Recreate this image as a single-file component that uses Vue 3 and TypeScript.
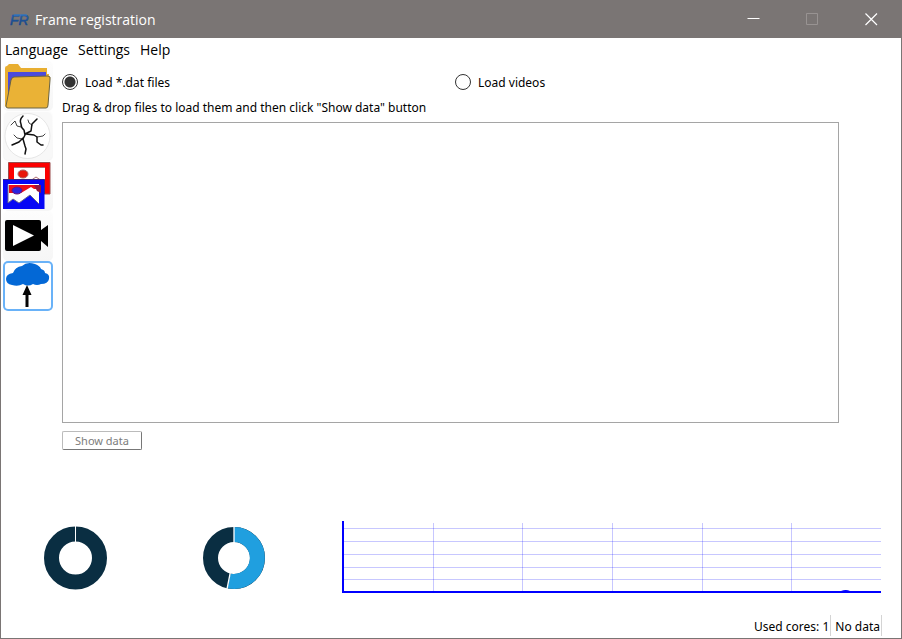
<script setup lang="ts">
import { computed, ref } from 'vue'

type Mode = 'dat' | 'video'
type Tool = 'open' | 'vessels' | 'images' | 'video' | 'load'

const mode = ref<Mode>('dat')
const activeTool = ref<Tool>('load')
const files = ref<string[]>([])

const menus = ['Language', 'Settings', 'Help']
const tools: { id: Tool; label: string }[] = [
  { id: 'open', label: 'Open folder' },
  { id: 'vessels', label: 'Vessels' },
  { id: 'images', label: 'Register images' },
  { id: 'video', label: 'Video' },
  { id: 'load', label: 'Load data' },
]

const status = computed(() => (files.value.length ? `${files.value.length} files` : 'No data'))

const gridRows = [7, 20, 33, 46, 58]
const gridColumns = [91, 180, 270, 360, 449]

function onDrop(event: DragEvent) {
  const dropped = Array.from(event.dataTransfer?.files ?? [])
  files.value.push(...dropped.map((f) => f.name))
}
</script>

<template>
  <div class="window">
    <header class="titlebar">
      <svg class="logo" viewBox="0 0 22 18" aria-hidden="true">
        <defs>
          <linearGradient id="logo-fill" x1="0" y1="0" x2="0" y2="1">
            <stop offset="0" stop-color="#2f78c8" />
            <stop offset="1" stop-color="#0b2f66" />
          </linearGradient>
        </defs>
        <text x="1" y="14" fill="url(#logo-fill)" stroke="#1d4f94" stroke-width=".5">FR</text>
        <path d="M5 4H18" stroke="#2f78c8" stroke-width="1.200" />
      </svg>
      <h1>Frame registration</h1>
      <div class="controls">
        <button type="button" aria-label="Minimize">
          <svg viewBox="0 0 13 13"><path d="M.5 5.500H12.500" stroke="#fff" /></svg>
        </button>
        <button type="button" aria-label="Maximize" disabled>
          <svg viewBox="0 0 13 13"><path d="M.5 .5H11.500V11.500H.5Z" stroke="#989392" /></svg>
        </button>
        <button type="button" aria-label="Close">
          <svg viewBox="0 0 13 13"><path d="M.5 .5L12 12M12 .5L.5 12" stroke="#fff" stroke-width="1.200" /></svg>
        </button>
      </div>
    </header>

    <nav class="menubar">
      <button v-for="menu in menus" :key="menu" type="button">{{ menu }}</button>
    </nav>

    <div class="body">
      <aside class="toolbar">
        <button
          v-for="tool in tools"
          :key="tool.id"
          type="button"
          :aria-label="tool.label"
          :class="{ active: tool.id === activeTool }"
          @click="activeTool = tool.id"
        >
          <svg v-if="tool.id === 'open'" viewBox="0 0 50 50">
            <path d="M2 45V7Q2 5 4 5L6 3H15L18 7H44V13H46L42 46H3Z" fill="#e8ae30" />
            <path d="M5 11H43V18H12L6 42H5Z" fill="#4c4bdc" />
            <path d="M11 16Q9 16 8 19L3 45Q3 47 5 47H43Q45 47 45 44L47 19Q48 15 45 15Z" fill="#eab236" stroke="#6b6340" />
          </svg>
          <svg v-else-if="tool.id === 'vessels'" viewBox="0 0 50 50">
            <rect x="1" y="1" width="48" height="48" rx="5" fill="#f8f8f8" />
            <circle cx="24.500" cy="25" r="22.500" fill="#fff" stroke="#ddd" stroke-width=".7" />
            <g fill="none" stroke="#111" stroke-linecap="round" stroke-linejoin="round">
              <path stroke-width="1.500" d="M20 5Q16 9 18 13Q18 17 21 19L22 24L20 28L22 35L23 38L22 43M22 23L28 20L29 13L34 8M23 23L31 24L34 26L34 31L38 34L40 34M20 27L16 31L9 34" />
              <path stroke-width=".8" d="M18 16L14 15L12 10L8 14M29 14L26 12L25 9M34 26L40 25L42 23M19 28L14 27L11 24" />
            </g>
          </svg>
          <svg v-else-if="tool.id === 'images'" viewBox="0 0 50 50">
            <path d="M5.500 1.500H47V33H5.500Z" fill="#fb0000" stroke="#9a4b4b" />
            <path d="M11 6H42V23L38 20L32 26L24 22L18 27L11 24Z" fill="#fff" />
            <path d="M11 6.500H42M24 22L33 16L42 22" fill="none" stroke="#b07070" />
            <ellipse cx="20" cy="13" rx="5" ry="4" fill="#e8180c" stroke="#a66" />
            <path d="M0 18H41.500V48H0Z" fill="#0707f5" />
            <path d="M5 23H36V43L27 34L16 42L10 38L5 42Z" fill="#fff" />
            <path d="M6 24H36V28H31L28 26L18 32H6Z" fill="#ef0c18" />
            <path d="M31 24H38V32L34 30Z" fill="#901640" />
            <ellipse cx="14" cy="29.500" rx="5" ry="3.500" fill="#2b22df" stroke="#6b1478" />
            <path d="M5 23.500V42L10 38L16 42L27 34L36 43" fill="none" stroke="#66668c" />
            <path d="M0 18.500H41.500V33" fill="none" stroke="#352780" />
          </svg>
          <svg v-else-if="tool.id === 'video'" viewBox="0 0 50 50">
            <path d="M4 9H36Q38 9 38 11V19L45 14V36L38 30V38Q38 40 36 40H4Q2 40 2 38V11Q2 9 4 9Z" fill="#000" />
            <path d="M10 14L31 24.500L10 35Z" fill="#fff" />
          </svg>
          <svg v-else viewBox="0 0 50 50">
            <path d="M9 24Q3 23 3 18Q3 13 10 12Q12 6 19 5Q24 0 32 3Q37 5 38 8Q42 9 42 12Q47 13 46 18Q45 23 38 23Q34 25 30 23Q25 26 20 23Q15 26 9 24Z" fill="#0368d6" />
            <path d="M24 24L28.500 34H25.500V46H22.500V34H19.500Z" fill="#050505" />
          </svg>
        </button>
      </aside>

      <main class="content">
        <div class="modes" role="radiogroup" aria-label="Source">
          <label><input v-model="mode" type="radio" name="mode" value="dat" /><span>Load *.dat files</span></label>
          <label><input v-model="mode" type="radio" name="mode" value="video" /><span>Load videos</span></label>
        </div>
        <p id="drop-hint" class="hint">Drag &amp; drop files to load them and then click "Show data" button</p>
        <ul class="dropzone" aria-labelledby="drop-hint" tabindex="0" @dragover.prevent @drop.prevent="onDrop">
          <li v-for="file in files" :key="file">{{ file }}</li>
        </ul>
        <button class="show" type="button" :disabled="files.length === 0">Show data</button>
      </main>
    </div>

    <section class="monitors">
      <svg class="donut" viewBox="0 0 64 64" aria-hidden="true">
        <circle cx="31.500" cy="32" r="24" fill="none" stroke="#0a2e42" stroke-width="15" />
        <path d="M31.500 0V17" stroke="#fff" />
      </svg>
      <svg class="donut" viewBox="0 0 64 64" aria-hidden="true">
        <circle cx="32" cy="32" r="23.500" fill="none" stroke="#0a2e42" stroke-width="15" />
        <path d="M32 8.500A23.500 23.500 0 1 1 27 55" fill="none" stroke="#209fdf" stroke-width="15" />
        <path d="M32 0V17M28.200 47L25 63" stroke="#fff" stroke-width="1.300" />
      </svg>
      <svg class="chart" viewBox="0 0 539 72" preserveAspectRatio="none" shape-rendering="crispEdges" aria-hidden="true">
        <g stroke="#00f" stroke-opacity=".22">
          <path v-for="y in gridRows" :key="`r${y}`" :d="`M2 ${y + 0.5}H539`" />
          <path v-for="x in gridColumns" :key="`c${x}`" :d="`M${x + 0.5} 2V70`" />
        </g>
        <path d="M499 70Q504 68 508 70Z" fill="#00f" shape-rendering="auto" />
        <path d="M1 0V71H539" fill="none" stroke="#00f" stroke-width="2" />
      </svg>
    </section>

    <footer class="statusbar">
      <span>Used cores: 1</span>
      <span>{{ status }}</span>
    </footer>
  </div>
</template>

<style>
body {
  margin: 0;
}
</style>

<style scoped>
* {
  box-sizing: border-box;
}
.window {
  display: flex;
  flex-direction: column;
  min-height: 100vh;
  border: 1px solid #7a7574;
  background: #fff;
  color: #000;
  font-family: "Noto Sans", "DejaVu Sans Condensed", sans-serif;
  font-size: 12px;
  line-height: 16px;
}
button {
  padding: 0;
  border: 0;
  background: none;
  color: inherit;
  font: inherit;
}
svg {
  display: block;
}
.titlebar {
  display: flex;
  align-items: center;
  height: 37px;
  padding-left: 8px;
  background: #7a7574;
  color: #fff;
}
.logo {
  width: 22px;
  height: 18px;
  margin-right: 4px;
  font: italic 14px "Liberation Sans", sans-serif;
}
h1 {
  flex: 1;
  margin: 0;
  font: 14px/20px "Open Sans", sans-serif;
}
.controls {
  display: flex;
  align-self: stretch;
}
.controls button {
  display: grid;
  place-items: center;
  width: 59px;
}
.controls svg {
  width: 13px;
  height: 13px;
  fill: none;
}
.menubar {
  display: flex;
  gap: 10px;
  padding: 2px 4px 1px;
  font: 14px/20px "Open Sans", sans-serif;
}
.body {
  display: flex;
  flex: 1;
  gap: 9px;
  padding: 0 62px 0 2px;
}
.toolbar {
  display: flex;
  flex-direction: column;
  width: 50px;
}
.toolbar button {
  width: 50px;
  height: 50px;
  border-radius: 5px;
  background: linear-gradient(#fdfdfd, #f6f6f6);
}
.toolbar button.active {
  background: #fff;
  box-shadow: inset 0 0 0 2px #69b2f8;
}
.toolbar svg {
  width: 100%;
  height: 100%;
}
.content {
  display: flex;
  flex: 1;
  flex-direction: column;
  align-items: stretch;
  padding-top: 13px;
}
.modes {
  display: grid;
  grid-template-columns: 1fr 1fr;
  gap: 9px;
}
.modes label {
  display: flex;
  align-items: flex-start;
  gap: 7px;
  line-height: 18px;
}
.modes input {
  appearance: none;
  width: 16px;
  height: 16px;
  margin: 0;
  border: 1px solid #333;
  border-radius: 50%;
  background: #fff;
}
.modes input:checked {
  background: radial-gradient(circle, #333 5px, #fff 6px);
}
.hint {
  margin: 8px 0 6px;
}
.dropzone {
  flex: 1;
  margin: 0;
  padding: 4px;
  border: 1px solid #a5a5a5;
  list-style: none;
}
.show {
  align-self: flex-start;
  width: 80px;
  height: 19px;
  margin-top: 8px;
  border: 1px solid #777;
  border-top-color: #bbb;
  border-left-color: #bbb;
  border-radius: 2px;
  font-size: 11px;
  line-height: 16px;
}
.show:disabled {
  color: #7c7c7c;
}
.monitors {
  display: flex;
  align-items: flex-end;
  margin-top: 71px;
  padding: 0 20px 0 43px;
}
.donut {
  flex: none;
  width: 64px;
  height: 64px;
  margin-right: 94px;
  margin-bottom: 3px;
}
.donut + .chart {
  margin-left: -18px;
}
.chart {
  flex: 1;
  min-width: 0;
  height: 72px;
}
.statusbar {
  display: flex;
  justify-content: flex-end;
  gap: 4px;
  padding: 22px 19px 2px;
}
.statusbar span {
  padding: 4px 1px 1px 0;
  border-right: 1px solid #d4d4d4;
}
</style>
